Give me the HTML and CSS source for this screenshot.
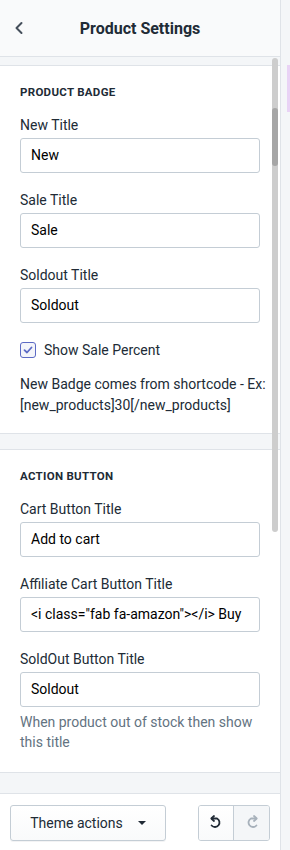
FILE: index.html
```html
<!DOCTYPE html>
<html>
<head>
    <title>Product Settings</title>
    <link rel="stylesheet" href="styles.css">
</head>
<body>

<div class="panel">
    <div class="header">
        <span class="back">
            <svg width="10" height="14" viewBox="0 0 10 14"><path d="M7.5 2 L2.5 7 L7.5 12" fill="none" stroke="#454f5b" stroke-width="2" stroke-linecap="round" stroke-linejoin="round"/></svg>
        </span>
        <h1>Product Settings</h1>
    </div>

    <div class="content">
        <div class="section">
            <h3>Product Badge</h3>
            <div class="field">
                <label>New Title</label>
                <div class="input">New</div>
            </div>
            <div class="field">
                <label>Sale Title</label>
                <div class="input">Sale</div>
            </div>
            <div class="field">
                <label>Soldout Title</label>
                <div class="input">Soldout</div>
            </div>
            <div class="check-row">
                <span class="checkbox">
                    <svg width="12" height="12" viewBox="0 0 12 12"><path d="M2.5 6.2 L5 8.5 L9.5 3.5" fill="none" stroke="#5c6ac4" stroke-width="1.8" stroke-linecap="round" stroke-linejoin="round"/></svg>
                </span>
                <span>Show Sale Percent</span>
            </div>
            <p class="note">New Badge comes from shortcode - Ex:<br>[new_products]30[/new_products]</p>
        </div>

        <div class="section">
            <h3>Action Button</h3>
            <div class="field">
                <label>Cart Button Title</label>
                <div class="input">Add to cart</div>
            </div>
            <div class="field">
                <label>Affiliate Cart Button Title</label>
                <div class="input">&lt;i class="fab fa-amazon"&gt;&lt;/i&gt; Buy</div>
            </div>
            <div class="field last">
                <label>SoldOut Button Title</label>
                <div class="input">Soldout</div>
                <p class="help">When product out of stock then show this title</p>
            </div>
        </div>

        <div class="scrollbar"><div class="thumb"></div></div>
    </div>

    <div class="footer">
        <button class="actions">Theme actions <span class="caret"></span></button>
        <div class="history">
            <button class="undo">
                <svg width="18" height="18" viewBox="0 0 18 18"><path d="M5 4.5 H10 A4.5 4.5 0 1 1 4.6 11.5" fill="none" stroke="#212b36" stroke-width="1.8" stroke-linecap="round"/><path d="M7 2 L4.3 4.5 L7 7" fill="none" stroke="#212b36" stroke-width="1.8" stroke-linecap="round" stroke-linejoin="round"/></svg>
            </button>
            <button class="redo">
                <svg width="18" height="18" viewBox="0 0 18 18"><path d="M13 4.5 H8 A4.5 4.5 0 1 0 13.4 11.5" fill="none" stroke="#a7b1bb" stroke-width="1.8" stroke-linecap="round"/><path d="M11 2 L13.7 4.5 L11 7" fill="none" stroke="#a7b1bb" stroke-width="1.8" stroke-linecap="round" stroke-linejoin="round"/></svg>
            </button>
        </div>
    </div>
</div>
<div class="preview-edge"></div>

</body>
</html>
```

FILE: styles.css
```css
body { margin: 0; font-family: Roboto, Arial, sans-serif; background: #f4f6f8; color: #212b36; font-size: 14px; }
.panel {
    width: 280px; height: 850px; display: flex; flex-direction: column;
    border-right: 1px solid #dfe3e8; background: #f4f6f8; overflow: hidden;
}
.header {
    height: 57px; flex-shrink: 0; display: flex; align-items: center; justify-content: center;
    position: relative; background: #f9fafb; border-bottom: 1px solid #dfe3e8; box-sizing: border-box;
}
.header h1 { margin: 0; font-size: 16px; font-weight: 700; }
.back { position: absolute; left: 14px; top: 21px; }
.content { flex: 1; position: relative; overflow: hidden; padding-top: 8px; }
.section {
    background: white; border-top: 1px solid #dfe3e8; border-bottom: 1px solid #dfe3e8;
    padding: 18px 20px 17px 20px; margin-bottom: 15px;
}
.section h3 {
    margin: 0 0 15px 0; font-size: 11.5px; font-weight: 700; text-transform: uppercase;
    letter-spacing: 0.3px; line-height: 16px;
}
.field { margin-bottom: 17px; }
.field label { display: block; font-size: 14px; line-height: 20px; margin-bottom: 3px; }
.input {
    height: 35px; box-sizing: border-box; border: 1px solid #c4cdd5; border-radius: 3px;
    padding: 0 10px; line-height: 33px; font-size: 14px; color: #000;
    white-space: nowrap; overflow: hidden;
}
.check-row { display: flex; align-items: center; gap: 8px; line-height: 20px; }
.checkbox {
    width: 16px; height: 16px; box-sizing: border-box; border: 1px solid #5c6ac4; border-radius: 3px;
    display: flex; align-items: center; justify-content: center; background: #f4f5fa;
}
.note { margin: 14px 0 0 0; line-height: 21px; font-size: 14px; white-space: nowrap; }
.field.last { margin-bottom: 0; }
.help { margin: 5px 0 3px 0; color: #637381; line-height: 20px; font-size: 14px; }
.scrollbar {
    position: absolute; left: 272px; top: 1px; width: 6px; height: 474px;
    background: #cdcdcd; border-radius: 3px;
}
.thumb { margin-top: 50px; height: 58px; background: #a6a6a6; border-radius: 3px; }
.footer {
    height: 57px; flex-shrink: 0; background: white; border-top: 1px solid #dfe3e8;
    display: flex; align-items: center; justify-content: space-between; padding: 0 10px; box-sizing: border-box;
}
button { font-family: inherit; font-size: 14px; color: #212b36; }
.actions {
    width: 156px; height: 36px; background: linear-gradient(#fff, #f9fafb); border: 1px solid #c4cdd5;
    border-radius: 3px; display: flex; align-items: center; justify-content: center; gap: 15px;
    box-shadow: 0 1px 0 rgba(22,29,37,0.05); margin-top: 2px;
}
.caret { width: 0; height: 0; border-left: 4px solid transparent; border-right: 4px solid transparent; border-top: 4px solid #212b36; }
.history { display: flex; border: 1px solid #c4cdd5; border-radius: 3px; overflow: hidden; margin-top: 2px; }
.history button { width: 35px; height: 34px; border: none; padding: 0; display: flex; align-items: center; justify-content: center; }
.undo { background: linear-gradient(#fff, #f9fafb); border-right: 1px solid #c4cdd5 !important; }
.redo { background: #f4f6f8; }
.preview-edge { position: fixed; left: 287px; top: 65px; width: 3px; height: 47px; background: #e9d3f5; }
```
